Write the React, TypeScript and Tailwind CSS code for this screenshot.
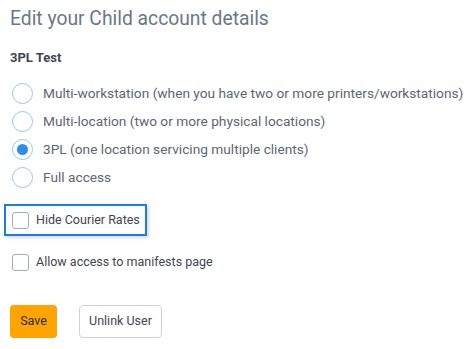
import React, { useState } from 'react';

const roles = [
  'Multi-workstation (when you have two or more printers/workstations)',
  'Multi-location (two or more physical locations)',
  '3PL (one location servicing multiple clients)',
  'Full access',
];

const App = () => {
  const [role, setRole] = useState(2);
  const [hideRates, setHideRates] = useState(false);
  const [manifests, setManifests] = useState(false);

  return (
    <div className="w-[475px] h-[349px] bg-white px-[10px] pt-[6px] text-[#4a5260]" style={{ fontFamily: 'Roboto, sans-serif' }}>
      <h2 className="text-[19.3px] leading-[26px] text-[#6b7785]">Edit your Child account details</h2>
      <div className="mt-[18px] text-[13px] font-bold leading-[16px] text-[#3e4651]">3PL Test</div>

      <div className="mt-[13px] flex flex-col">
        {roles.map((label, i) => (
          <label key={label} className="flex h-[28px] items-center gap-[10px] cursor-pointer">
            <span className="ml-[2px] flex h-[21px] w-[21px] shrink-0 items-center justify-center rounded-full border border-[#90c8f8] bg-white">
              {role === i && <span className="h-[11px] w-[11px] rounded-full bg-[#2d8cf0]" />}
            </span>
            <input type="radio" className="hidden" checked={role === i} onChange={() => setRole(i)} />
            <span className="whitespace-nowrap text-[13.7px] text-[#5d6673]">{label}</span>
          </label>
        ))}
      </div>

      <div className="mt-[13px] -ml-[6px] flex h-[32px] w-[143px] items-center gap-[7px] border-2 border-[#1a7bf0] pl-[6px] shadow-[2px_2px_3px_rgba(0,0,0,0.15)]">
        <button
          onClick={() => setHideRates(!hideRates)}
          className="h-[17px] w-[17px] shrink-0 rounded-[3px] border border-[#a3adb7] bg-white"
        />
        <span className="whitespace-nowrap text-[12.5px] text-[#3e4651]">Hide Courier Rates</span>
      </div>

      <div className="mt-[15px] flex h-[23px] items-center gap-[7px] pl-[2px]">
        <button
          onClick={() => setManifests(!manifests)}
          className="h-[17px] w-[17px] shrink-0 rounded-[3px] border border-[#a3adb7] bg-white"
        />
        <span className="whitespace-nowrap text-[12.5px] text-[#3e4651]">Allow access to manifests page</span>
      </div>

      <div className="mt-[31px] flex gap-[22px]">
        <button className="h-[33px] w-[47px] rounded-[4px] bg-[#ffa400] text-[12.5px] text-[#2b2b2b]">Save</button>
        <button className="h-[33px] w-[83px] rounded-[4px] border border-[#cfd3d7] bg-white text-[12.5px] text-[#3e4651]">Unlink User</button>
      </div>
    </div>
  );
};

export default App;
